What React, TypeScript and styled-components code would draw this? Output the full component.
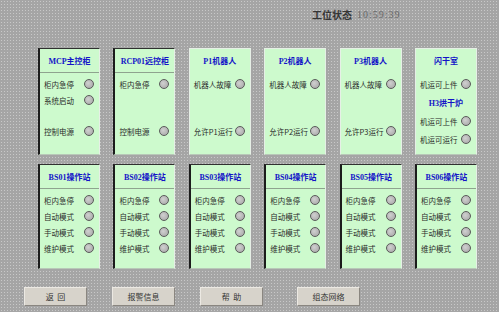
import styled, { createGlobalStyle } from 'styled-components';

const GlobalStyle = createGlobalStyle`
  html, body {
    margin: 0;
    padding: 0;
    background: #a8a8a8;
  }
`;

const Screen = styled.div`
  width: 499px;
  height: 312px;
  box-sizing: border-box;
  overflow: hidden;
  background-color: #a5a5a5;
  background-image: radial-gradient(circle, #c8c8c8 0.7px, transparent 0.9px);
  background-size: 3px 3px;
  display: flex;
  flex-direction: column;
  padding: 8px 0 0 38px;
  font-family: 'Liberation Serif', 'Noto Sans CJK SC', serif;
`;

const TitleBar = styled.div`
  height: 12px;
  display: flex;
  align-items: center;
  gap: 5px;
  padding-left: 274px;
  font-size: 10px;
  font-weight: bold;
  .label {
    color: #353535;
  }
  .clock {
    color: #686868;
    font-weight: normal;
    letter-spacing: 1px;
  }
`;

const PanelRow = styled.div<{ $top: number; $h: number }>`
  display: grid;
  grid-template-columns: repeat(6, 62px);
  grid-template-rows: ${(p) => p.$h}px;
  column-gap: 13.4px;
  margin-top: ${(p) => p.$top}px;
`;

const Panel = styled.div<{ $sunken?: boolean }>`
  box-sizing: border-box;
  background: #cdfacd;
  display: flex;
  flex-direction: column;
  overflow: hidden;
  border-right: 1px solid #e6efe6;
  border-bottom: 1px solid #b8c8b8;
  border-left: ${(p) => (p.$sunken ? '2px solid #1c1c1c' : '1px solid #e6efe6')};
  border-top: ${(p) => (p.$sunken ? '1px solid #303030' : '1px solid #e6efe6')};
`;

const Header = styled.div<{ $divider?: boolean }>`
  height: 23px;
  flex-shrink: 0;
  display: flex;
  align-items: center;
  justify-content: center;
  color: #1414c8;
  font-size: 8px;
  font-weight: bold;
  white-space: nowrap;
  border-bottom: ${(p) => (p.$divider ? '1px solid #8fa38f' : '1px solid transparent')};
  margin-bottom: 3px;
`;

const SubHeader = styled.div`
  height: 20px;
  flex-shrink: 0;
  display: flex;
  align-items: center;
  justify-content: center;
  color: #1414c8;
  font-size: 8px;
  font-weight: bold;
`;

const Row = styled.div<{ $push?: boolean; $h?: number }>`
  height: ${(p) => p.$h ?? 16}px;
  flex-shrink: 0;
  display: flex;
  align-items: center;
  justify-content: space-between;
  padding: 0 5px 0 4px;
  margin-top: ${(p) => (p.$push ? 'auto' : '0')};
  margin-bottom: ${(p) => (p.$push ? '15px' : '0')};
  font-size: 7.5px;
  color: #2a2a2a;
  white-space: nowrap;
  font-family: 'Noto Sans CJK SC', sans-serif;
`;

const Lamp = styled.span`
  width: 8px;
  height: 8px;
  border-radius: 50%;
  background: radial-gradient(circle at 40% 40%, #d0d0d0, #a4a4a4);
  border: 1px solid #5a5a5a;
  flex-shrink: 0;
`;

const ButtonBar = styled.div`
  display: flex;
  gap: 25px;
  margin-top: 18px;
  margin-left: -14px;
`;

const Button = styled.div<{ $gapBefore?: number }>`
  width: 63px;
  height: 19px;
  box-sizing: border-box;
  display: flex;
  align-items: center;
  justify-content: center;
  background: #d7d3cb;
  border-top: 1px solid #ece9e3;
  border-left: 1px solid #ece9e3;
  border-right: 1px solid #8a8680;
  border-bottom: 1px solid #8a8680;
  font-size: 8px;
  color: #333;
  font-family: 'Noto Sans CJK SC', sans-serif;
  margin-left: ${(p) => p.$gapBefore ?? 0}px;
  white-space: pre;
`;

const stations = ['BS01', 'BS02', 'BS03', 'BS04', 'BS05', 'BS06'];
const modes = ['柜内急停', '自动模式', '手动模式', '维护模式'];

function Item({ label, push, h }: { label: string; push?: boolean; h?: number }) {
  return (
    <Row $push={push} $h={h}>
      <span>{label}</span>
      <Lamp />
    </Row>
  );
}

export default function App() {
  return (
    <>
      <GlobalStyle />
      <Screen>
        <TitleBar>
          <span className="label">工位状态</span>
          <span className="clock">10:59:39</span>
        </TitleBar>

        <PanelRow $top={28} $h={107}>
          <Panel $sunken>
            <Header $divider>MCP主控柜</Header>
            <Item label="柜内急停" />
            <Item label="系统启动" />
            <Item label="控制电源" push />
          </Panel>
          <Panel $sunken>
            <Header $divider>RCP01远控柜</Header>
            <Item label="柜内急停" />
            <Item label="控制电源" push />
          </Panel>
          <Panel>
            <Header>P1机器人</Header>
            <Item label="机器人故障" />
            <Item label="允许P1运行" push />
          </Panel>
          <Panel>
            <Header>P2机器人</Header>
            <Item label="机器人故障" />
            <Item label="允许P2运行" push />
          </Panel>
          <Panel>
            <Header>P3机器人</Header>
            <Item label="机器人故障" />
            <Item label="允许P3运行" push />
          </Panel>
          <Panel>
            <Header>闪干室</Header>
            <Item label="机运可上件" />
            <SubHeader>H3烘干炉</SubHeader>
            <Item label="机运可上件" h={18} />
            <Item label="机运可运行" h={18} />
          </Panel>
        </PanelRow>

        <PanelRow $top={9} $h={105}>
          {stations.map((s) => (
            <Panel $sunken key={s}>
              <Header $divider>{s}操作站</Header>
              {modes.map((m) => (
                <Item label={m} key={m} />
              ))}
            </Panel>
          ))}
        </PanelRow>

        <ButtonBar>
          <Button>{'返  回'}</Button>
          <Button>报警信息</Button>
          <Button>{'帮  助'}</Button>
          <Button $gapBefore={9}>组态网络</Button>
        </ButtonBar>
      </Screen>
    </>
  );
}
